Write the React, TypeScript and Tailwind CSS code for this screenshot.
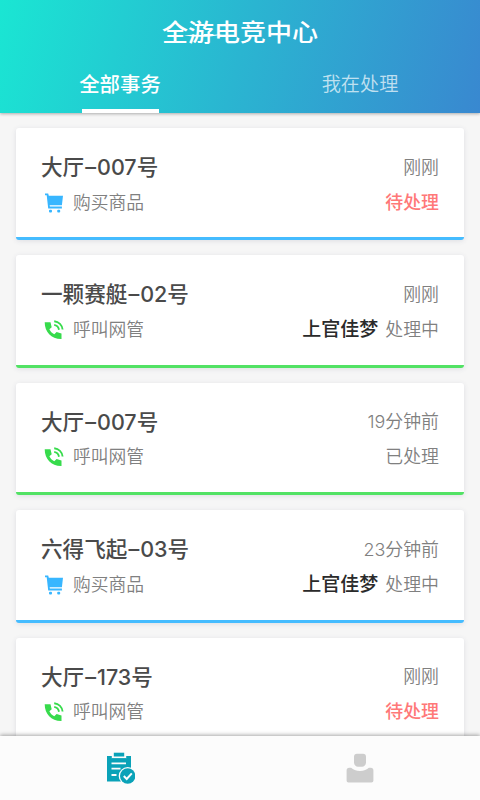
import clsx from "clsx";

type Task = {
  id: number;
  place: string;
  seat: string;
  type: "buy" | "call";
  time: string;
  status: string;
  handler?: string;
  urgent?: boolean;
};

const tasks: Task[] = [
  { id: 1, place: "大厅", seat: "007", type: "buy", time: "刚刚", status: "待处理", urgent: true },
  { id: 2, place: "一颗赛艇", seat: "02", type: "call", time: "刚刚", status: "处理中", handler: "上官佳梦" },
  { id: 3, place: "大厅", seat: "007", type: "call", time: "19分钟前", status: "已处理" },
  { id: 4, place: "六得飞起", seat: "03", type: "buy", time: "23分钟前", status: "处理中", handler: "上官佳梦" },
  { id: 5, place: "大厅", seat: "173", type: "call", time: "刚刚", status: "待处理", urgent: true },
];

function CartIcon() {
  return (
    <svg width="20" height="20" viewBox="0 0 20 20" fill="#38b6ff">
      <path d="M1 .6h3.200l.6 2.200H19l-1.100 9.400H5.600l.3 1.400h12v1.800H4.200L2.700 2.200H1z" />
      <rect x="5" y="16.800" width="3" height="2.700" rx="1" />
      <rect x="13.200" y="16.800" width="3" height="2.700" rx="1" />
    </svg>
  );
}

function CallIcon() {
  return (
    <svg width="20" height="20" viewBox="0 0 20 20" fill="#37db4c">
      <path d="M.7 2.200h5.800l1.200 5-2.300 2.100c1 2.200 2.600 3.900 4.900 5l2.300-2.200 4.900 1.300v5.700C7.400 19.300.7 12 .7 2.200z" />
      <path
        d="M10.200 4.900c2.600.5 4.300 2.200 4.800 4.800M10.200 1.200c4.600.4 7.900 3.800 8.400 8.300"
        fill="none"
        stroke="#37db4c"
        strokeWidth="1.900"
      />
    </svg>
  );
}

function TaskCard({ task }: { task: Task }) {
  return (
    <li
      className={clsx(
        "h-[112.4px] shrink-0 rounded-[3px] border-b-[3px] bg-white px-[25px] pt-[25px] shadow-[0_1px_5px_rgba(60,70,110,0.13)]",
        task.type === "buy" ? "border-[#45bcff]" : "border-[#52e264]"
      )}
    >
      <div className="flex h-7 items-center justify-between">
        <h2 className="flex text-[21.6px] leading-7 font-medium text-[#4a4a4a]">
          <span>{task.place}</span>
          <span className="px-px">–</span>
          <span className="text-[21.5px] font-[450]">{task.seat}</span>
          <span>号</span>
        </h2>
        <span className="pt-px text-[17.9px] leading-7 font-[350] text-[#808080]">{task.time}</span>
      </div>
      <div className="mt-[7.500px] flex h-7 items-center justify-between">
        <div className="flex items-center pl-[3px]">
          {task.type === "buy" ? <CartIcon /> : <CallIcon />}
          <span className="ml-[9px] text-[17.8px] leading-7 font-[350] text-[#808080]">
            {task.type === "buy" ? "购买商品" : "呼叫网管"}
          </span>
        </div>
        <div className="flex items-center gap-[7px] leading-7">
          {task.handler && (
            <span className="pt-px text-[19px] font-medium text-[#2a2a2a]">{task.handler}</span>
          )}
          <span
            className={clsx(
              "text-[17.9px]",
              task.urgent ? "font-medium text-[#ff7878]" : "font-[350] text-[#808080]"
            )}
          >
            {task.status}
          </span>
        </div>
      </div>
    </li>
  );
}

function Header() {
  return (
    <header className="relative z-10 flex h-[113px] shrink-0 flex-col bg-[linear-gradient(105deg,#1ae6d3_0%,#2ab5d1_50%,#3988d0_100%)] text-white shadow-[0_1px_3px_rgba(0,0,0,0.3)]">
      <div className="flex h-[66px] items-center justify-center">
        <h1 className="relative scale-y-90 text-[26px] leading-none font-medium">
          全游电竞中心
          <svg className="absolute top-[13px] left-[22px]" width="38" height="5" viewBox="0 0 38 5" fill="#fff">
            <path d="M0 3C12 0 20 4 38 1 24 6 12 4 0 3z" />
          </svg>
        </h1>
      </div>
      <nav className="grid flex-1 grid-cols-2">
        <button className="flex flex-col items-center justify-between pt-[5px]">
          <span className="text-[20.4px] leading-7 font-medium">全部事务</span>
          <span className="h-1 w-[77px] bg-white" />
        </button>
        <button className="flex flex-col items-center pt-1">
          <span className="text-[19.2px] leading-7 font-[350] text-white/70">我在处理</span>
        </button>
      </nav>
    </header>
  );
}

function TabBar() {
  return (
    <footer className="relative z-10 grid h-16 shrink-0 grid-cols-2 bg-[#fcfcfc] shadow-[0_-1px_4px_rgba(0,0,0,0.35)]">
      <button className="flex items-center justify-center">
        <svg width="30" height="34" viewBox="0 0 30 34">
          <path d="M2 5h24v25.500H2z" fill="#0aa2b8" />
          <path d="M6.800 0h14.400v7.500H6.800z" fill="#fcfcfc" />
          <path d="M8.800 1.700h10.400v3.800H8.800z" fill="#0aa2b8" />
          <path d="M6.800 7.200h14.400v4H6.800z" fill="#0aa2b8" />
          <path d="M6.500 12.300h14.500M6.500 17.600h9M6.500 24h5" stroke="#fcfcfc" strokeWidth="1.800" />
          <circle cx="22.700" cy="25" r="9" fill="#fcfcfc" />
          <circle cx="22.700" cy="25" r="7.700" fill="#0aa2b8" />
          <path d="m18.800 25 2.900 3 5.100-5.700" fill="none" stroke="#fcfcfc" strokeWidth="2" />
        </svg>
      </button>
      <button className="flex items-center justify-center">
        <svg width="28" height="30" viewBox="0 0 28 30" fill="#cdcdcd">
          <path d="M11 .8h6c2 0 3 1 3 3v5.700c0 2.500-2 4.300-4 4.300h-4c-2 0-4-1.800-4-4.300V3.800c0-2 1-3 3-3z" />
          <path d="M.6 17.300c0-1.500 1-2.500 2.500-2.500h2c2 2 5 3.200 8.900 3.200s6.900-1.200 8.900-3.200h2c1.500 0 2.500 1 2.500 2.500v10.200c0 1.200-.8 2-2 2H2.600c-1.200 0-2-.8-2-2z" />
        </svg>
      </button>
    </footer>
  );
}

export default function App() {
  return (
    <div className="flex h-[800px] w-[480px] flex-col overflow-hidden bg-[#f6f6f6] font-[Inter,'Noto_Sans_CJK_SC',sans-serif]">
      <Header />
      <ul className="flex min-h-0 flex-1 flex-col gap-[15px] overflow-hidden px-4 pt-[15px]">
        {tasks.map((task) => (
          <TaskCard key={task.id} task={task} />
        ))}
      </ul>
      <TabBar />
    </div>
  );
}
